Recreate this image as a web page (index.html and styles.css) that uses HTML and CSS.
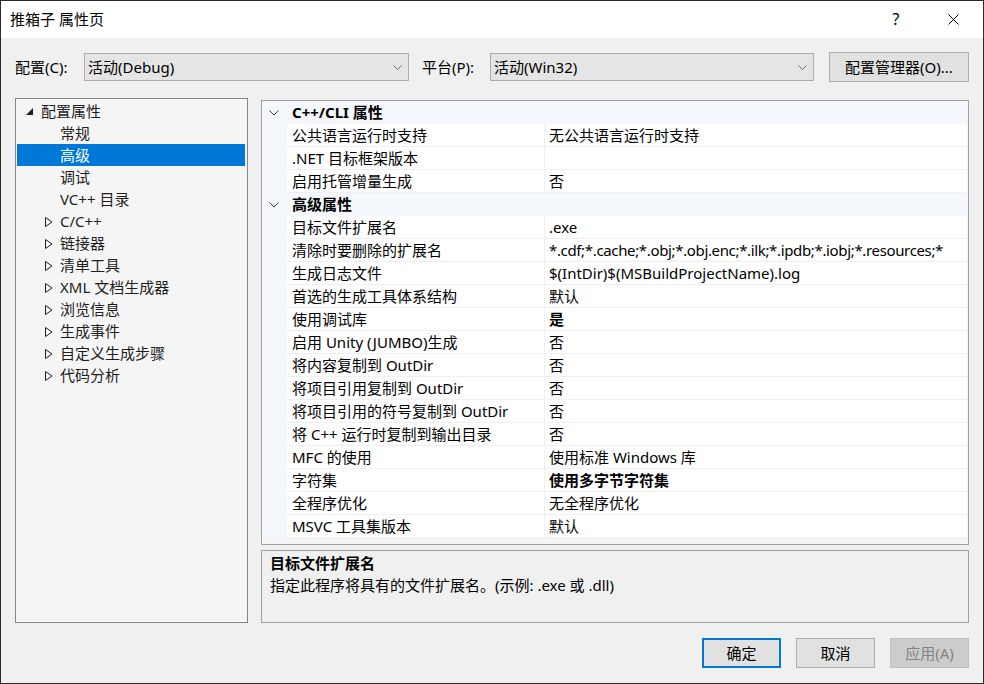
FILE: index.html
```html
<!DOCTYPE html>
<html lang="zh-CN">
<head>
<meta charset="utf-8">
<title>推箱子 属性页</title>
<link rel="stylesheet" href="styles.css">
</head>
<body>
<div class="window">
  <div class="titlebar">
    <span class="title">推箱子 属性页</span>
    <div class="caption-btns">
      <span class="cap-btn help">?</span>
      <span class="cap-btn close"><svg width="11" height="11" viewBox="0 0 11 11"><path d="M0.5 0.5 L10.5 10.5 M10.5 0.5 L0.5 10.5" stroke="#000" stroke-width="1" fill="none"/></svg></span>
    </div>
  </div>
  <div class="main">
    <div class="config-row">
      <span class="lbl lbl-config">配置(C):</span>
      <div class="combo combo-config"><span class="combo-text">活动(Debug)</span><svg class="combo-chev" width="9" height="5" viewBox="0 0 9 5"><path d="M0.5 0.5 L4.5 4.5 L8.5 0.5" stroke="#6d6d6d" fill="none"/></svg></div>
      <span class="lbl lbl-platform">平台(P):</span>
      <div class="combo combo-platform"><span class="combo-text">活动(Win32)</span><svg class="combo-chev" width="9" height="5" viewBox="0 0 9 5"><path d="M0.5 0.5 L4.5 4.5 L8.5 0.5" stroke="#6d6d6d" fill="none"/></svg></div>
      <button class="btn btn-manager">配置管理器(O)...</button>
    </div>
    <div class="content">
      <div class="tree">
        <div class="trow l0"><span class="exp"><svg width="8" height="7" viewBox="0 0 8 7"><polygon points="8,0 8,7 1,7" fill="#1e1e1e"/></svg></span><span>配置属性</span></div>
        <div class="trow l1"><span class="exp"></span><span>常规</span></div>
        <div class="trow l1 selected"><span class="exp"></span><span>高级</span></div>
        <div class="trow l1"><span class="exp"></span><span>调试</span></div>
        <div class="trow l1"><span class="exp"></span><span>VC++ 目录</span></div>
        <div class="trow l1"><span class="exp"><svg width="8" height="10" viewBox="0 0 8 10"><polygon points="0.5,0.5 7,5 0.5,9.5" fill="none" stroke="#1e1e1e"/></svg></span><span>C/C++</span></div>
        <div class="trow l1"><span class="exp"><svg width="8" height="10" viewBox="0 0 8 10"><polygon points="0.5,0.5 7,5 0.5,9.5" fill="none" stroke="#1e1e1e"/></svg></span><span>链接器</span></div>
        <div class="trow l1"><span class="exp"><svg width="8" height="10" viewBox="0 0 8 10"><polygon points="0.5,0.5 7,5 0.5,9.5" fill="none" stroke="#1e1e1e"/></svg></span><span>清单工具</span></div>
        <div class="trow l1"><span class="exp"><svg width="8" height="10" viewBox="0 0 8 10"><polygon points="0.5,0.5 7,5 0.5,9.5" fill="none" stroke="#1e1e1e"/></svg></span><span>XML 文档生成器</span></div>
        <div class="trow l1"><span class="exp"><svg width="8" height="10" viewBox="0 0 8 10"><polygon points="0.5,0.5 7,5 0.5,9.5" fill="none" stroke="#1e1e1e"/></svg></span><span>浏览信息</span></div>
        <div class="trow l1"><span class="exp"><svg width="8" height="10" viewBox="0 0 8 10"><polygon points="0.5,0.5 7,5 0.5,9.5" fill="none" stroke="#1e1e1e"/></svg></span><span>生成事件</span></div>
        <div class="trow l1"><span class="exp"><svg width="8" height="10" viewBox="0 0 8 10"><polygon points="0.5,0.5 7,5 0.5,9.5" fill="none" stroke="#1e1e1e"/></svg></span><span>自定义生成步骤</span></div>
        <div class="trow l1"><span class="exp"><svg width="8" height="10" viewBox="0 0 8 10"><polygon points="0.5,0.5 7,5 0.5,9.5" fill="none" stroke="#1e1e1e"/></svg></span><span>代码分析</span></div>
      </div>
      <div class="right">
        <div class="grid">
          <div class="cat"><span class="gut"><svg width="10" height="6" viewBox="0 0 10 6"><path d="M0.5 0.5 L5 5 L9.5 0.5" stroke="#3c3c3c" fill="none"/></svg></span><span class="cat-name">C++/CLI 属性</span></div>
          <div class="prow"><span class="gut"></span><span class="pname">公共语言运行时支持</span><span class="pval">无公共语言运行时支持</span></div>
          <div class="prow"><span class="gut"></span><span class="pname">.NET 目标框架版本</span><span class="pval"></span></div>
          <div class="prow"><span class="gut"></span><span class="pname">启用托管增量生成</span><span class="pval">否</span></div>
          <div class="cat"><span class="gut"><svg width="10" height="6" viewBox="0 0 10 6"><path d="M0.5 0.5 L5 5 L9.5 0.5" stroke="#3c3c3c" fill="none"/></svg></span><span class="cat-name">高级属性</span></div>
          <div class="prow"><span class="gut"></span><span class="pname">目标文件扩展名</span><span class="pval">.exe</span></div>
          <div class="prow"><span class="gut"></span><span class="pname">清除时要删除的扩展名</span><span class="pval pval-tight">*.cdf;*.cache;*.obj;*.obj.enc;*.ilk;*.ipdb;*.iobj;*.resources;*</span></div>
          <div class="prow"><span class="gut"></span><span class="pname">生成日志文件</span><span class="pval">$(IntDir)$(MSBuildProjectName).log</span></div>
          <div class="prow"><span class="gut"></span><span class="pname">首选的生成工具体系结构</span><span class="pval">默认</span></div>
          <div class="prow"><span class="gut"></span><span class="pname">使用调试库</span><span class="pval bold">是</span></div>
          <div class="prow"><span class="gut"></span><span class="pname">启用 Unity (JUMBO)生成</span><span class="pval">否</span></div>
          <div class="prow"><span class="gut"></span><span class="pname">将内容复制到 OutDir</span><span class="pval">否</span></div>
          <div class="prow"><span class="gut"></span><span class="pname">将项目引用复制到 OutDir</span><span class="pval">否</span></div>
          <div class="prow"><span class="gut"></span><span class="pname">将项目引用的符号复制到 OutDir</span><span class="pval">否</span></div>
          <div class="prow"><span class="gut"></span><span class="pname">将 C++ 运行时复制到输出目录</span><span class="pval">否</span></div>
          <div class="prow"><span class="gut"></span><span class="pname">MFC 的使用</span><span class="pval">使用标准 Windows 库</span></div>
          <div class="prow"><span class="gut"></span><span class="pname">字符集</span><span class="pval bold">使用多字节字符集</span></div>
          <div class="prow"><span class="gut"></span><span class="pname">全程序优化</span><span class="pval">无全程序优化</span></div>
          <div class="prow"><span class="gut"></span><span class="pname">MSVC 工具集版本</span><span class="pval">默认</span></div>
        </div>
        <div class="desc">
          <div class="desc-title">目标文件扩展名</div>
          <div class="desc-text">指定此程序将具有的文件扩展名。(示例: .exe 或 .dll)</div>
        </div>
      </div>
    </div>
    <div class="footer">
      <button class="btn btn-dlg btn-default">确定</button>
      <button class="btn btn-dlg">取消</button>
      <button class="btn btn-dlg btn-disabled">应用(A)</button>
    </div>
  </div>
</div>
</body>
</html>
```

FILE: styles.css
```css
html, body {
  margin: 0;
  padding: 0;
}
body {
  font-family: "Noto Sans", "Noto Sans CJK SC", sans-serif;
  font-size: 15px;
  color: #000;
  background: #f0f0f0;
}
.window {
  width: 984px;
  height: 684px;
  box-sizing: border-box;
  border: 1px solid #2b2b2b;
  background: #f0f0f0;
  display: flex;
  flex-direction: column;
}
.titlebar {
  height: 37px;
  background: #fff;
  display: flex;
  align-items: center;
  justify-content: space-between;
  padding-left: 9px;
  flex: none;
}
.title {
  line-height: 20px;
  margin-top: -1px;
}
.caption-btns {
  display: flex;
  align-items: center;
  height: 100%;
  padding-right: 7px;
  gap: 11px;
}
.cap-btn {
  width: 46px;
  height: 100%;
  display: flex;
  align-items: center;
  justify-content: center;
}
.help {
  font-size: 16px;
  margin-top: -1px;
}
.close svg {
  display: block;
  margin-top: -1px;
}
.main {
  flex: 1;
  padding: 14px 14px 15px 14px;
  display: flex;
  flex-direction: column;
}
.config-row {
  height: 30px;
  display: flex;
  align-items: center;
}
.lbl {
  line-height: 20px;
}
.lbl-config {
  width: 69px;
}
.lbl-platform {
  width: 68px;
  margin-left: 13px;
}
.combo {
  box-sizing: border-box;
  height: 28px;
  border: 1px solid #adadad;
  background: #e5e5e5;
  display: flex;
  align-items: center;
  justify-content: space-between;
  padding: 0 6px 0 3px;
}
.combo-config {
  width: 325px;
}
.combo-platform {
  width: 324px;
}
.combo-text {
  line-height: 20px;
}
.combo-chev {
  display: block;
}
.btn {
  font-family: inherit;
  font-size: 15px;
  color: #000;
  background: #e1e1e1;
  border: 1px solid #adadad;
  box-sizing: border-box;
  padding: 0;
  margin: 0;
  line-height: 20px;
}
.btn-manager {
  width: 140px;
  height: 30px;
  margin-left: 15px;
}
.content {
  margin-top: 16px;
  height: 525px;
  display: flex;
  gap: 13px;
}
.tree {
  box-sizing: border-box;
  width: 233px;
  height: 525px;
  border: 1px solid #828790;
  background: #f5f5f5;
  padding: 1px 2px 0 1px;
}
.trow {
  height: 22px;
  display: flex;
  align-items: center;
  line-height: 20px;
  color: #1e1e1e;
}
.trow .exp {
  width: 17px;
  height: 22px;
  display: flex;
  align-items: center;
  flex: none;
}
.trow svg {
  display: block;
}
.trow.l0 {
  padding-left: 7px;
}
.trow.l0 .exp svg {
  margin-left: 1px;
  margin-top: 1px;
}
.trow.l1 {
  padding-left: 26px;
}
.trow.l1 .exp svg {
  margin-left: 2px;
  margin-top: 1px;
}
.trow.selected {
  background: #0078d7;
  color: #fff;
}
.right {
  width: 708px;
  margin-top: 2px;
  display: flex;
  flex-direction: column;
  gap: 5px;
}
.grid {
  box-sizing: border-box;
  height: 446px;
  border: 1px solid #a0a0a0;
  background: #f5f5f5;
  overflow: hidden;
}
.cat, .prow {
  display: grid;
  grid-template-columns: 25px 258px 422px;
  height: 23px;
}
.cat {
  background: #f4f7fb;
}
.gut {
  background: #f4f7fb;
  display: flex;
  align-items: center;
  justify-content: center;
}
.gut svg {
  display: block;
  margin-left: -1px;
}
.cat-name {
  grid-column: 2 / 4;
  font-weight: bold;
  line-height: 23px;
  padding-left: 5px;
}
.pname, .pval {
  background: #fff;
  border-bottom: 1px solid #f0f0f0;
  line-height: 23px;
  height: 22px;
  white-space: nowrap;
  overflow: hidden;
}
.pname {
  padding-left: 5px;
  border-right: 1px solid #f0f0f0;
}
.pval {
  padding-left: 4px;
}
.pval-tight {
  letter-spacing: -0.35px;
}
.bold {
  font-weight: bold;
}
.desc {
  box-sizing: border-box;
  height: 73px;
  border: 1px solid #a0a0a0;
  background: #f0f0f0;
  padding: 1px 8px 0 8px;
}
.desc-title {
  font-weight: bold;
  line-height: 22px;
}
.desc-text {
  line-height: 22px;
}
.footer {
  margin-top: 15px;
  display: flex;
  justify-content: flex-end;
  gap: 15px;
}
.btn-dlg {
  width: 79px;
  height: 30px;
}
.btn-default {
  border: 2px solid #0078d7;
}
.btn-disabled {
  background: #cccccc;
  border-color: #bfbfbf;
  color: #838383;
}
```
